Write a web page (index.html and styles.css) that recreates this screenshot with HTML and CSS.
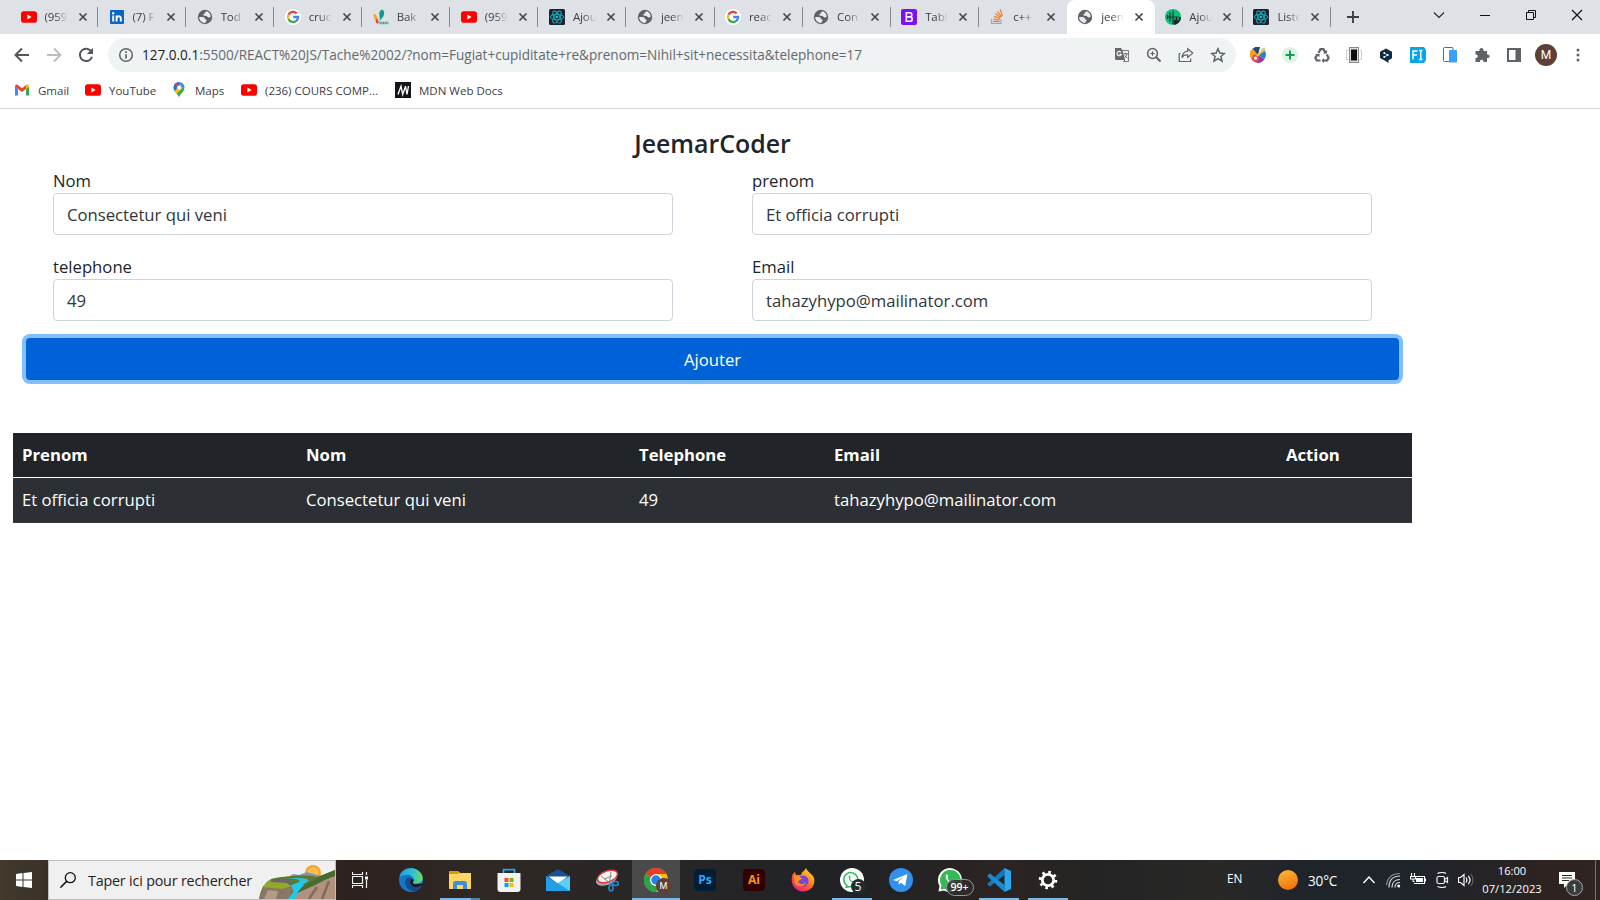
FILE: index.html
```html
<!DOCTYPE html>
<html lang="fr">
<head>
<meta charset="utf-8">
<title>jeemarCoder</title>
<link rel="stylesheet" href="styles.css">
</head>
<body>
<svg class="sprite" width="0" height="0">
  <symbol id="yt" viewBox="0 0 16 16"><rect y="2.3" width="16" height="11.4" rx="2.8" fill="#f00"/><path d="M6.4 5.5v5L10.6 8z" fill="#fff"/></symbol>
  <symbol id="globe" viewBox="0 0 16 16"><circle cx="8" cy="8" r="7.2" fill="#5f6368"/><path d="M9 2.200c2.500.3 4.500 2.500 4.800 5.300-.8 1-2.300 1.300-3 .8-.8-.6-.5-1.600-1.700-1.600H7.200c-.9 0-1.200-1.200-.3-1.700.8-.5.6-.8 1.200-1.300.5-.4.200-1 .9-1.500zM2.200 8h3.300c1.600 0 2.300 1 2.700 2 .3.900 1.700.6 1.500 1.600-.2.700-1 .8-1.200 1.600v.8C5 14 2.300 11.500 2.200 8z" fill="#e9ebee"/></symbol>
  <symbol id="google" viewBox="0 0 16 16"><circle cx="8" cy="8" r="8" fill="#fff"/><g fill="none" stroke-width="2.300"><path d="M11.700 4.400A5.100 5.100 0 0 0 3.500 5.700" stroke="#ea4335"/><path d="M3.500 5.700a5.100 5.100 0 0 0 0 4.600" stroke="#fbbc05"/><path d="M3.500 10.300a5.100 5.100 0 0 0 7.800 1.600" stroke="#34a853"/><path d="M11.300 11.900A5.100 5.100 0 0 0 13.100 8H8.200" stroke="#4285f4"/></g></symbol>
  <symbol id="react" viewBox="0 0 16 16"><rect width="16" height="16" rx="1.500" fill="#20232a"/><g fill="none" stroke="#12b5cb" stroke-width=".9"><ellipse cx="8" cy="8" rx="6.800" ry="2.700"/><ellipse cx="8" cy="8" rx="6.800" ry="2.700" transform="rotate(60 8 8)"/><ellipse cx="8" cy="8" rx="6.800" ry="2.700" transform="rotate(120 8 8)"/></g><circle cx="8" cy="8" r="1.300" fill="#12c5dc"/></symbol>
  <symbol id="close" viewBox="0 0 16 16"><path d="M4.500 4.500l7 7M11.500 4.500l-7 7" stroke="#45494d" stroke-width="1.700"/></symbol>
  <symbol id="phone" viewBox="0 0 16 16"><path d="M4.600 3.500c1-.8 1.700 1.300 1.800 2 .1.600-1 1-.6 1.500 1 1.700 1.900 2.500 3.300 3.100.6.200 1-1 1.500-.8.700.3 2.300 1 1.700 1.800-2.400 3.200-9.900-3-7.700-7.600z"/></symbol>
</svg>

<header class="browser">
  <div class="tabstrip">
    <div class="tab"><svg class="i16"><use href="#yt"/></svg><span class="tt">(959</span><svg class="i16 x"><use href="#close"/></svg></div>
    <div class="tab"><svg class="i16" viewBox="0 0 16 16"><rect x="1" y="1" width="14" height="14" rx="1" fill="#0a66c2"/><circle cx="4.200" cy="4.300" r="1.200" fill="#fff"/><path d="M4.200 6.500v6M7.600 12.500v-6M7.600 9.500c0-3 4.200-3 4.200 0v3" stroke="#fff" stroke-width="1.900" fill="none"/></svg><span class="tt">(7) F</span><svg class="i16 x"><use href="#close"/></svg></div>
    <div class="tab"><svg class="i16"><use href="#globe"/></svg><span class="tt">Tod</span><svg class="i16 x"><use href="#close"/></svg></div>
    <div class="tab"><svg class="i16"><use href="#google"/></svg><span class="tt">cruc</span><svg class="i16 x"><use href="#close"/></svg></div>
    <div class="tab"><svg class="i16" viewBox="0 0 16 16"><path d="M7 2c2-3 5 0 4 3 0 3-3 5-5 7C8 8 5 5 7 2z" fill="#109a8d"/><path d="M.5 5c2-.5 3 1 3.500 3s2 3 1 5C3 11 0 8 .5 5z" fill="#f6a623"/><path d="M3 9l3 4-1.500 2C3 14 2 11 3 9z" fill="#e8452c"/><path d="M6.500 14h9" stroke="#2aa69b" stroke-width="2.500" stroke-dasharray="1.200 .5"/></svg><span class="tt">Bak</span><svg class="i16 x"><use href="#close"/></svg></div>
    <div class="tab"><svg class="i16"><use href="#yt"/></svg><span class="tt">(959</span><svg class="i16 x"><use href="#close"/></svg></div>
    <div class="tab"><svg class="i16"><use href="#react"/></svg><span class="tt">Ajou</span><svg class="i16 x"><use href="#close"/></svg></div>
    <div class="tab"><svg class="i16"><use href="#globe"/></svg><span class="tt">jeen</span><svg class="i16 x"><use href="#close"/></svg></div>
    <div class="tab"><svg class="i16"><use href="#google"/></svg><span class="tt">reac</span><svg class="i16 x"><use href="#close"/></svg></div>
    <div class="tab"><svg class="i16"><use href="#globe"/></svg><span class="tt">Con</span><svg class="i16 x"><use href="#close"/></svg></div>
    <div class="tab"><svg class="i16" viewBox="0 0 16 16"><rect width="16" height="16" rx="2" fill="#7f10f5"/><path d="M5.300 3.700v8.600h3.500c3.200 0 3.200-4.300 0-4.400 2.700-.1 2.700-4.200 0-4.200zM5.300 7.900h3.500" fill="none" stroke="#fff" stroke-width="1.600"/></svg><span class="tt">Tabl</span><svg class="i16 x"><use href="#close"/></svg></div>
    <div class="tab nodiv"><svg class="i16" viewBox="0 0 16 16"><path d="M2.500 10v4.300h9.500V10" fill="none" stroke="#a5a8ab" stroke-width="1.200"/><path d="M4 12.300h6.500M4.200 10l6.400.8M4.900 7.400l6.100 2M6.300 4.500l5.400 3.900M8.500 2.300l4 5.500M11.300.5l2 6.500" stroke="#f48024" stroke-width="1.200"/></svg><span class="tt">c++</span><svg class="i16 x"><use href="#close"/></svg></div>
    <div class="tab active"><svg class="i16"><use href="#globe"/></svg><span class="tt">jeen</span><svg class="i16 x"><use href="#close"/></svg></div>
    <div class="tab"><svg class="i16" viewBox="0 0 16 16"><circle cx="8" cy="8" r="8" fill="#0cbf78"/><path d="M9 8h7a8 8 0 0 1-7 8z" fill="#1c232b"/><path d="M8 2v13M2 8h12M5 3.500v9M2.500 6v4" stroke="#12382f" stroke-width="1.200"/><path d="M10 8v3M13 8v3.500" stroke="#0cbf78" stroke-width="1.300"/></svg><span class="tt">Ajou</span><svg class="i16 x"><use href="#close"/></svg></div>
    <div class="tab"><svg class="i16"><use href="#react"/></svg><span class="tt">Liste</span><svg class="i16 x"><use href="#close"/></svg></div>
    <svg class="newtab" viewBox="0 0 16 16"><path d="M8 2v12M2 8h12" stroke="#3c4043" stroke-width="1.900"/></svg>
    <div class="wincontrols">
      <svg class="i16" viewBox="0 0 16 16"><path d="M3 5.500l5 5 5-5" fill="none" stroke="#222" stroke-width="1.100"/></svg>
      <svg class="i16" viewBox="0 0 16 16"><path d="M3 8.500h10" stroke="#111"/></svg>
      <svg class="i16" viewBox="0 0 16 16"><path d="M3.500 5.500h7v7h-7zM5.500 5.500v-2h7v7h-2" fill="none" stroke="#111"/></svg>
      <svg class="i16" viewBox="0 0 16 16"><path d="M3 3l10 10M13 3L3 13" stroke="#111" stroke-width="1.200"/></svg>
    </div>
  </div>

  <div class="toolbar">
    <div class="nav">
      <svg class="i16" viewBox="0 0 16 16"><path d="M15 8H2M8 1.500L1.500 8 8 14.500" fill="none" stroke="#53575b" stroke-width="2"/></svg>
      <svg class="i16" viewBox="0 0 16 16"><path d="M1 8h13M8 1.500L14.500 8 8 14.500" fill="none" stroke="#bbbdc0" stroke-width="2"/></svg>
      <svg class="i16" viewBox="0 0 16 16"><path d="M13.300 4.500A6.200 6.200 0 1 0 14 9.800" fill="none" stroke="#53575b" stroke-width="2"/><path d="M15 .8V7H8.800z" fill="#53575b"/></svg>
    </div>
    <div class="omnibox">
      <svg class="i16" viewBox="0 0 16 16"><circle cx="8" cy="8" r="6.300" fill="none" stroke="#5f6368" stroke-width="1.500"/><path d="M8 7.200v4.300M8 4.300v1.600" stroke="#5f6368" stroke-width="1.700"/></svg>
      <div class="url"><span class="host">127.0.0.1</span>:5500/REACT%20JS/Tache%2002/?nom=Fugiat+cupiditate+re&amp;prenom=Nihil+sit+necessita&amp;telephone=17</div>
      <div class="omni-actions">
        <svg class="i16" viewBox="0 0 16 16"><path d="M1 1h6l1.500 2L11 13H2.500C1.500 13 1 12.500 1 11.500z" fill="#666a6e"/><path d="M8.500 3.500h6v11H9.500L11 13" fill="none" stroke="#777" /><path d="M7 5.300a2.200 2.200 0 1 0 .3 2H5.200" fill="none" stroke="#fff" stroke-width="1.100"/><path d="M9.800 6.800h4M11.700 5.800v1M13 7c-.5 1.800-1.500 3-2.500 3.800M10.500 8.500l2.800 2.800" stroke="#666" fill="none"/></svg>
        <svg class="i16" viewBox="0 0 16 16"><circle cx="6.500" cy="6.500" r="4.900" fill="none" stroke="#5f6368" stroke-width="1.500"/><path d="M10 10l4.500 4.500" stroke="#5f6368" stroke-width="1.900"/><path d="M6.500 4.200v4.600M4.200 6.500h4.600" stroke="#5f6368" stroke-width="1.200"/></svg>
        <svg class="i16" viewBox="0 0 16 16"><path d="M2.500 6.500H1.200v8h11.500v-3" fill="none" stroke="#5f6368" stroke-width="1.200"/><path d="M9.700 1.800l5 4.300-5 4.300V8C7 7.800 5 8.800 4 10.800c.2-3.800 2.200-6.300 5.700-6.700z" fill="none" stroke="#5f6368" stroke-width="1.200"/></svg>
        <svg class="i16" viewBox="0 0 16 16"><path d="M8 1.800l1.800 4.300 4.600.4-3.500 3 1.100 4.600-4-2.500-4 2.500 1.100-4.600-3.500-3 4.600-.4z" fill="none" stroke="#5f6368" stroke-width="1.500"/></svg>
      </div>
    </div>
    <div class="exts">
      <svg class="i16" viewBox="0 0 16 16"><path d="M8 8L1 4a8 8 0 0 1 9-4z" fill="#27496d"/><path d="M8 8L0 11V4l3-2z" fill="#f5a623"/><path d="M8 8l-7 3a8 8 0 0 0 7 5z" fill="#e73360"/><path d="M8 8v8a8 8 0 0 0 6.500-4z" fill="#8a3fa0"/><path d="M8 8l6.500 4A8 8 0 0 0 15 4z" fill="#2980c9"/><path d="M8 8l5-7 2.500 3z" fill="#58b9c9"/><circle cx="5.500" cy="11" r="3.500" fill="#ef4b55"/><circle cx="5.500" cy="11" r="1.500" fill="#fff"/><path d="M7 9l8-8" stroke="#ffc83d" stroke-width="2"/></svg>
      <svg class="i16" viewBox="0 0 16 16"><circle cx="8" cy="8" r="8" fill="#def3e2"/><path d="M8 3.500v9M3.500 8h9" stroke="#0aa05e" stroke-width="2"/></svg>
      <svg class="i16" viewBox="0 0 16 16"><g fill="none" stroke="#5f6368" stroke-width="2.200"><path d="M4.500 6l2-3.800h3L11.500 6"/><path d="M12.800 7.500l1.800 3.300-1.400 2.700H9"/><path d="M6.500 13.500H2.700l-1.400-2.700L3.500 7.500"/></g><path d="M9 6.500h4V3zM10 11v5l-2.500-2.500zM1 7h4.500v3z" fill="#5f6368"/></svg>
      <svg class="i16" viewBox="0 0 16 16"><path d="M2.500 3.500H.5v9h2M13.500 3.500h2v9h-2" fill="none" stroke="#ccc"/><rect x="3.500" y=".5" width="9" height="15" fill="#ddd" stroke="#888"/><path d="M5 2.500h6v11H5z" fill="#0c0c0c"/></svg>
      <svg class="i16" viewBox="0 0 16 16"><path d="M8 1.500l6 3.300v6.500l-3.500 2V16l-3-2-5.500-3V4.800z" fill="#0f2b46"/><path d="M6.200 6L9.800 8l-3.600 2" fill="none" stroke="#fff" stroke-width=".8"/><circle cx="6.200" cy="6" r=".9" fill="#fff"/><circle cx="9.800" cy="8" r=".9" fill="#fff"/><circle cx="6.200" cy="10" r=".9" fill="#fff"/></svg>
      <svg class="i16" viewBox="0 0 16 16"><path d="M0 0h14l2 3v10l-2 3H0z" fill="#08a4e8"/><path d="M3 12.500V4h4.500M3 8h4M9 3.500h3.500M9 12.500h3.500M10.800 3.500v9" fill="none" stroke="#fff" stroke-width="1.400"/></svg>
      <svg class="i16" viewBox="0 0 16 16"><rect x="1.500" y=".5" width="9.500" height="14" rx="1" fill="#fff" stroke="#667"/><rect x="7" y="3" width="8" height="12.500" rx="1" fill="#3aa0fa"/></svg>
      <svg class="i16" viewBox="0 0 16 16"><path d="M1.500 4h4c-1-3 4-4.500 4-.7V4H13v3.500c3.500-.5 3.500 4 0 3.500v4H9.500c.3-3-4-3-3.500 0H1.500v-4c3 .3 3-3.800 0-3.500z" fill="#5f6368"/></svg>
      <svg class="i16" viewBox="0 0 16 16"><path d="M2 2h12v12H2z" fill="#fff" stroke="#5f6368" stroke-width="2"/><path d="M9.500 2H14v12H9.500z" fill="#5f6368"/></svg>
      <div class="avatar">M</div>
      <svg class="i16" viewBox="0 0 16 16"><g fill="#5f6368"><circle cx="8" cy="3" r="1.500"/><circle cx="8" cy="8" r="1.500"/><circle cx="8" cy="13" r="1.500"/></g></svg>
    </div>
  </div>

  <div class="bookmarks">
    <div class="bm gmail"><svg class="i16" viewBox="0 0 16 16"><path d="M1 4v9.500h3V7z" fill="#4285f4"/><path d="M15 4v9.500h-3V7z" fill="#34a853"/><path d="M1 4.500L4 7l4 3 4-3V3L8 6.200 3.500 2.700C2.300 2 1 2.800 1 4.500z" fill="#ea4335"/><path d="M12 3v4l3-2.500C15 2.500 13.500 2 12 3z" fill="#fbbc04"/></svg><span>Gmail</span></div>
    <div class="bm youtube"><svg class="i16"><use href="#yt"/></svg><span>YouTube</span></div>
    <div class="bm maps"><svg class="i16" viewBox="0 0 16 16"><path d="M8 16C7.500 12 2.500 10 2.500 5.500L8 5.300l5.500 0C13.500 10 8.500 12 8 16z" fill="#34a853"/><path d="M2.500 5.500A5.500 5.500 0 0 1 8 0v5.500L3.500 9z" fill="#1a73e8"/><path d="M3 3.200C3.500 2 5 .5 6.500.2L8 5z" fill="#ea4335"/><path d="M8 0a5.500 5.500 0 0 1 5.500 5.500L8 5.500z" fill="#4285f4"/><path d="M3.500 9L10 2.500 11 7l-5.500 5z" fill="#fbbc04"/><circle cx="8" cy="5.500" r="2" fill="#fff"/></svg><span>Maps</span></div>
    <div class="bm cours"><svg class="i16"><use href="#yt"/></svg><span>(236) COURS COMP...</span></div>
    <div class="bm mdn"><svg class="i16" viewBox="0 0 16 16"><rect width="16" height="16" fill="#15141a"/><path d="M3 12.500L6 4.200l1.700 8.300L10.500 4.200 12 12.500 13.500 4" fill="none" stroke="#fff" stroke-width="1.300"/></svg><span>MDN Web Docs</span></div>
  </div>
</header>

<main class="page">
  <h4 class="title"><span>JeemarCoder</span></h4>
  <form class="form">
    <div class="fields">
      <div class="field"><label>Nom</label><div class="control">Consectetur qui veni</div></div>
      <div class="field"><label>prenom</label><div class="control">Et officia corrupti</div></div>
      <div class="field"><label>telephone</label><div class="control">49</div></div>
      <div class="field"><label>Email</label><div class="control">tahazyhypo@mailinator.com</div></div>
    </div>
    <div class="submit">Ajouter</div>
  </form>
  <div class="table">
    <div class="row head"><span>Prenom</span><span>Nom</span><span>Telephone</span><span>Email</span><span>Action</span></div>
    <div class="row"><span>Et officia corrupti</span><span>Consectetur qui veni</span><span>49</span><span>tahazyhypo@mailinator.com</span><span></span></div>
  </div>
</main>

<footer class="taskbar">
  <div class="start"><svg class="i16" viewBox="0 0 16 16"><path d="M0 2l6.500-1v6.500H0zM7.500.900L16 0v7.500H7.500zM0 8.500h6.500V15L0 14zM7.500 8.500H16V16l-8.500-.9z" fill="#fff"/></svg></div>
  <div class="search">
    <svg class="i16" viewBox="0 0 16 16"><circle cx="10.300" cy="5.700" r="5" fill="none" stroke="#111" stroke-width="1.300"/><path d="M6.600 9.400L.4 15.600" stroke="#111" stroke-width="1.500"/></svg>
    <span class="search-text">Taper ici pour rechercher</span>
    <svg class="scene" viewBox="0 0 76 34" width="76" height="34"><circle cx="54" cy="8" r="8" fill="#f9a52b"/><circle cx="54" cy="8" r="5.500" fill="#ffc04d"/><path d="M28 13l6-4 6 1 8-3 14 4 2 5-20 3z" fill="#8c93a8"/><path d="M0 34c2-12 8-20 16-21 12-2 32-4 42-1l18-7v29z" fill="#5b7a35"/><path d="M0 34l5-12 15-3 14 4-4 11z" fill="#8a7567"/><path d="M3 22l8-7 16 1 6 5-10 3z" fill="#93a928"/><path d="M12 15.500l16 1 8 5" stroke="#6d6468" stroke-width="3" fill="none"/><path d="M26 14c14-1 20 2 9 5-7 2 1 4-1 8l-5 7h10l3-9c5-4-1-5 6-8 5-3-4-4-12-4z" fill="#25c8e4"/><path d="M76 6v28H36c4-10 10-9 18-15z" fill="#b0927f"/><path d="M76 5L62 11 43 22l-5 6 16-7 14-7 8-3z" fill="#456b2e"/><path d="M58 22l-8 12M70 16l-7 18" stroke="#83695b" stroke-width="2.500"/><path d="M9 25l-4 9h12l2-8z" fill="#b59b87"/></svg>
  </div>
  <div class="taskview"><svg class="i16" viewBox="0 0 16 16"><path d="M.5 0v2.500h10V0M.5 16v-2.500h10V16M.5 4.500h10v7H.5zM14.500 0v3M14.500 8v8" fill="none" stroke="#f2f2f2" stroke-width="1.200"/><path d="M13 4.500h3v3h-3z" fill="#fff"/></svg></div>
  <div class="apps">
    <div class="app"><svg viewBox="0 0 24 24"><defs><linearGradient id="eg" x1="0" x2="1"><stop offset="0" stop-color="#1b9de2"/><stop offset=".6" stop-color="#35c1d2"/><stop offset="1" stop-color="#6fe04a"/></linearGradient></defs><circle cx="12" cy="12" r="12" fill="#1477c9"/><path d="M.5 9C2-1 17-3 22.500 6c3.500 6-1 11-7 10-3-.5-2-2-1-4 0-5-7-7-14-3z" fill="url(#eg)"/><path d="M7 11c-3 6 2 13 10 12 3-1 5-3 5.500-5-6 4-13 0-11-6 1-2 2-1 2.500-1-2-2-5-2-7 0z" fill="#134c90"/><path d="M11.500 12c-2 6 5 10 11 5.500.5-.5 1 0 .5 1 2-4 1-3-7-2.500-3-.5-2-2-1-4-1-1.500-2.500-1.500-3.500 0z" fill="#211f20"/></svg></div>
    <div class="app run wide"><svg viewBox="0 0 24 24"><path d="M1 3h9l2 2h11v16H1z" fill="#ffd563"/><path d="M1 3h9l1 3H1z" fill="#dc9900"/><path d="M5 21v-5c0-2 1-3 2-3h10c1 0 2 1 2 3v5h-4v-4H9v4z" fill="#3e8edb"/></svg></div>
    <div class="app"><svg viewBox="0 0 24 24"><path d="M6.500 6V1.700h11V6" fill="none" stroke="#27a5e8" stroke-width="1.800"/><path d="M.5 5h23v16c0 2-1 3-3 3h-17c-2 0-3-1-3-3z" fill="#f2f2f2"/><path fill="#f25022" d="M7.500 10h4v4h-4z"/><path fill="#7fba00" d="M12.500 10h4v4h-4z"/><path fill="#00a4ef" d="M7.500 15h4v4h-4z"/><path fill="#ffb900" d="M12.500 15h4v4h-4z"/></svg></div>
    <div class="app"><svg viewBox="0 0 24 24"><path d="M0 8l12-7 12 7v7H0z" fill="#1b4f91"/><path d="M2.500 8.500h19L12 16z" fill="#fff"/><path d="M0 8l12 7.500L24 8v15H0z" fill="#209fe5"/><path d="M24 8v15L11.500 15z" fill="#5fcef4"/></svg></div>
    <div class="app"><svg viewBox="0 0 24 24"><ellipse cx="11.500" cy="11" rx="11" ry="6" transform="rotate(-20 11.500 11)" fill="#a5a5a8"/><ellipse cx="12.500" cy="8.500" rx="10.500" ry="5.500" transform="rotate(-20 12.500 8.500)" fill="#f4f4f4" stroke="#dc3740" stroke-width="1.400"/><path d="M6 8l10 8M16 4l-2 13M9 11l8-3" stroke="#888"/><g fill="none" stroke="#2585cc" stroke-width="1.700"><ellipse cx="20.500" cy="15.500" rx="3" ry="2"/><ellipse cx="16" cy="20" rx="2" ry="3"/></g></svg></div>
    <div class="app run focus"><svg viewBox="0 0 24 24"><circle cx="12" cy="12" r="12" fill="#fbbc05"/><path d="M12 12L1.600 6A12 12 0 0 1 22.400 6H12z" fill="#e33b2e"/><path d="M1.600 6A12 12 0 0 0 12 24l5-9-5-3z" fill="#2ba24c"/><circle cx="12" cy="12" r="6" fill="#fff"/><circle cx="12" cy="12" r="4.700" fill="#2d7de9"/></svg><span class="badge mbadge">M</span></div>
    <div class="app"><div class="adobe ps">Ps</div></div>
    <div class="app"><div class="adobe ai">Ai</div></div>
    <div class="app"><svg viewBox="0 0 24 24"><defs><linearGradient id="fx" x1="1" y1="0" x2=".3" y2="1"><stop offset="0" stop-color="#fff24a"/><stop offset=".4" stop-color="#ff9a20"/><stop offset=".8" stop-color="#ff3b48"/><stop offset="1" stop-color="#e7229b"/></linearGradient></defs><path d="M4 4l1 3 5 0c1-4 3-3 5-7 1 4 6 5 8 10 2 9-5 13.500-11 13.500S-1 18 1 9c0-2 1-4 3-5z" fill="url(#fx)"/><circle cx="12" cy="13" r="5.500" fill="#7546d8"/><path d="M3 8c5-2 5 2 9 2-3 1-3 3-5 3 1 4 6 4 8 1-1 6-11 6-12-1z" fill="#ff8d25"/></svg></div>
    <div class="app run"><svg viewBox="0 0 24 24"><circle cx="12" cy="12" r="12" fill="#fff"/><path d="M7 17.500A7 7 0 1 1 10 18.600L6.200 19.300z" fill="none" stroke="#29bf5a" stroke-width="1.500"/><use href="#phone" x="5" y="4.500" width="14" height="14" fill="#29bf5a"/></svg><span class="badge five">5</span></div>
    <div class="app"><svg viewBox="0 0 24 24"><circle cx="12" cy="12" r="12" fill="#3390ec"/><path d="M4 12L18.500 6l-2.300 12-4.300-3.200-2.200 2v-3.500L15 8.500l-7 4.800z" fill="#fff"/></svg></div>
    <div class="app"><svg viewBox="0 0 24 24"><path d="M.5 23.500l1-5.500A12 12 0 1 1 6 22.500z" fill="#fff"/><path d="M2.500 21.500l1-4A10.300 10.300 0 1 1 7 21z" fill="#35b956"/><use href="#phone" x="3" y="2.500" width="18" height="18" fill="#fff"/></svg><span class="badge many">99+</span></div>
    <div class="app run"><svg viewBox="0 0 24 24"><path d="M17.500 0v7L3 18.500 0 16z" fill="#1478bd"/><path d="M0 8l3-2.500L17.500 17v7z" fill="#1b8bd5"/><path d="M17.500 0L24 3v18l-6.500 3z" fill="#2ba7f0"/></svg></div>
    <div class="app run"><svg viewBox="0 0 24 24"><circle cx="12" cy="12" r="5.700" fill="none" stroke="#fff" stroke-width="2.800"/><circle cx="12" cy="12" r="7.800" fill="none" stroke="#fff" stroke-width="3" stroke-dasharray="2.600 3.526"/></svg></div>
  </div>
  <div class="tray">
    <span class="lang">EN</span>
    <span class="sun"></span>
    <span class="temp">30°C</span>
    <svg class="t1" viewBox="0 0 16 16"><path d="M2.500 11L8 5l5.500 6" fill="none" stroke="#fff" stroke-width="1.400"/></svg>
    <svg class="t2" viewBox="0 0 16 16"><g fill="none" stroke="#d8d8d8" stroke-width="1.200"><path d="M3 15.500C3 8 7 4 14 4"/><path d="M6 15.500c0-5 3-8 8-8"/><path d="M9 15.500c0-3 2-5 5-5"/><path d="M.5 13C1.500 6 6 1.500 14 1.500" opacity=".6"/></g><circle cx="12.700" cy="14" r="1.500" fill="#fff"/></svg>
    <svg class="t2" viewBox="0 0 16 16"><path d="M5 4.500h9.500v7H4M15.500 6.500v3M1.500 1v3M4.500 1v3M.5 4.500h5v2.500h-5zM3 7v2l1.500 1" fill="none" stroke="#fff" stroke-width="1.100"/><path d="M6 6h7v4H6z" fill="#fff"/></svg>
    <svg class="t2" viewBox="0 0 16 16"><rect x="3" y="4.500" width="7.500" height="7" rx="1.500" fill="none" stroke="#eee" stroke-width="1.200"/><path d="M10.500 7.500l3-2v5l-3-2M3.500 1.500C6 .2 10 .2 12 1.500M3.500 14.500c2.500 1.300 6.500 1.300 8.500 0" fill="none" stroke="#eee" stroke-width="1.200"/></svg>
    <svg class="t2" viewBox="0 0 16 16"><path d="M.5 5.500h2L6 2.500v11l-3.500-3h-2zM8 5.500c1 1.500 1 3.500 0 5M10.300 3.800c2 2.500 2 6 0 8.400" fill="none" stroke="#fff" stroke-width="1.200"/><path d="M12.700 2c3 3.500 3 8.500 0 12" fill="none" stroke="#777"/></svg>
    <div class="clock"><span>16:00</span><span>07/12/2023</span></div>
    <div class="notif"><svg class="i16" viewBox="0 0 16 16"><path d="M0 0h16v12H9l-4 4v-4H0z" fill="#fff"/><path d="M3 3.500h10M3 6h10M3 8.500h7" stroke="#2b2625"/></svg><span class="badge one">1</span></div>
    <span class="showdesk"></span>
  </div>
</footer>
</body>
</html>
```
FILE: styles.css
```css
* { box-sizing: border-box; }
body {
  margin: 0;
  width: 1600px;
  height: 900px;
  overflow: hidden;
  display: flex;
  flex-direction: column;
  background: #fff;
  color: #212529;
  font-family: "Open Sans", "Noto Sans", sans-serif;
}
.sprite { position: absolute; }
svg { display: block; flex: none; }
.i16 { width: 16px; height: 16px; flex: none; }

/* Browser chrome */
.browser { height: 109px; border-bottom: 1px solid #d5d7da; }
.tabstrip { height: 34px; background: #dee1e6; display: flex; align-items: center; padding-left: 10px; }
.tab { width: 88.070px; height: 34px; display: flex; align-items: center; padding-left: 10.500px; background: linear-gradient(#85888d, #85888d) right 7px / 1px 20px no-repeat; }
.tab.nodiv, .tab.active { background: none; }
.tab.active { background: #fff; border-radius: 8px 8px 0 0; }
.tt {
  width: 23px;
  margin-left: 8px;
  white-space: nowrap;
  font-size: 11.500px;
  line-height: 16px;
  letter-spacing: -.1px;
  color: #3c4043;
  -webkit-mask-image: linear-gradient(90deg, #000 45%, transparent);
  mask-image: linear-gradient(90deg, #000 45%, transparent);
}
.x { margin-left: 7px; }
.newtab { width: 16px; height: 16px; margin-left: 14px; }
.wincontrols { margin: 0 15px 5px auto; display: flex; gap: 30px; }
.toolbar { height: 41px; display: flex; align-items: center; padding: 1px 0 0 14px; }
.nav { display: flex; gap: 16px; }
.omnibox { width: 1128px; height: 34px; margin-left: 14px; border-radius: 17px; background: #eff3f4; display: flex; align-items: center; padding: 0 10px; }
.url { margin-left: 8px; font-size: 13.560px; white-space: nowrap; color: #65696e; }
.host { color: #202124; }
.omni-actions { margin-left: auto; display: flex; gap: 16px; }
.exts { display: flex; align-items: center; gap: 16px; margin-left: 14px; }
.avatar { width: 22px; height: 22px; margin: 0 -3px; border-radius: 50%; background: #5d4037; color: #fff; font: 12px/22px Roboto, sans-serif; text-align: center; }
.bookmarks { height: 30px; display: flex; align-items: center; padding-left: 14px; color: #3c4043; font-size: 11.500px; white-space: nowrap; }
.bm { display: flex; align-items: center; gap: 8px; }
.gmail { width: 71px; }
.youtube { width: 86px; }
.maps { width: 70px; }
.cours { width: 154px; }

/* Web page */
.page { height: 751px; width: 1424px; padding: 19px 12px 0 13px; font-size: 16.700px; line-height: 26.400px; }
.title { margin: 0 0 10px; height: 31px; font-size: 24.900px; line-height: 31px; font-weight: 600; text-align: center; }
.form { padding: 0 13px; }
.fields { display: grid; grid-template-columns: 620px 620px; column-gap: 79px; row-gap: 18px; padding: 0 27px; }
.field { height: 68px; display: flex; flex-direction: column; }
.field label { height: 24px; line-height: 24px; }
.control { height: 42px; border: 1px solid #ced4da; border-radius: 4px; padding: 0 13px; line-height: 41px; color: #30363b; }
.submit { height: 42px; margin-top: 15px; border-radius: 4px; background: #0062d6; box-shadow: 0 0 0 4px #80c0ff; color: #fff; text-align: center; line-height: 43px; }
.table { margin-top: 53px; background: #212529; color: #fff; }
.row { display: grid; grid-template-columns: 284px 333px 195px 452px 1fr; padding-left: 9px; height: 45px; align-items: center; background: #2c3034; border-bottom: 1px solid #373b3e; }
.head { background: #212529; font-weight: 700; border-bottom: 1px solid #fff; }

/* Taskbar */
.taskbar { height: 40px; display: flex; color: #fff; background: linear-gradient(90deg, #423a2c 0, #3a3028 48px, #2c2220 350px, #2f2824 480px, #252527 720px, #202225 840px, #2b2422 1000px, #242424 1100px, #292827 1220px, #1f242b 1310px, #1f242b 1420px, #2c2322 1540px, #302421 1600px); }
.start, .taskview { width: 48px; display: flex; align-items: center; justify-content: center; }
.search { width: 288px; background: #f0f0f0; border: 1px solid #bfbfbf; display: flex; align-items: center; padding-left: 11px; color: #222; }
.search-text { margin-left: 12px; width: 172px; font-size: 14.300px; letter-spacing: -.18px; white-space: nowrap; }
.scene { align-self: flex-end; }
.apps { display: flex; margin-left: 2.500px; }
.app { position: relative; width: 49px; display: flex; align-items: center; justify-content: center; }
.app > svg { width: 24px; height: 24px; }
.run::after { content: ""; position: absolute; left: 4.500px; bottom: 0; width: 40px; height: 2px; background: #76b9ed; }
.wide::after { background: linear-gradient(90deg, #76b9ed 31px, #557ea0 31px); }
.focus { background: linear-gradient(#4b4a4a, #4b4a4a) center / 48px 40px no-repeat; }
.focus::after { left: .5px; width: 48px; }
.adobe { width: 22px; height: 22px; border-radius: 4px; font-size: 12px; line-height: 21px; font-weight: 700; text-align: center; }
.ps { background: #001e36; color: #31a8ff; }
.ai { background: #330000; color: #ff9a00; }
.badge { position: absolute; text-align: center; }
.mbadge { left: 24px; top: 18px; width: 16px; height: 16px; border-radius: 50%; background: #5d4037; font: 9px/16px Roboto, sans-serif; }
.five { left: 23px; top: 19px; width: 15px; height: 15px; border-radius: 50%; background: #202b35; font-size: 12px; line-height: 15px; }
.many { left: 20px; top: 19px; width: 28px; height: 17px; border: 1px solid #999; border-radius: 9px; background: rgba(45, 45, 45, .85); font-size: 10.500px; font-weight: 600; line-height: 15px; }
.tray { margin-left: auto; display: flex; align-items: center; }
.lang { width: 50px; font-size: 11.800px; margin-bottom: 5px; }
.sun { width: 20px; height: 20px; margin-left: 1px; border-radius: 50%; background: linear-gradient(160deg, #f9bd35, #f2650b); }
.temp { width: 53px; margin-left: 10px; font-size: 13.600px; letter-spacing: -.2px; }
.t1, .t2 { width: 16px; height: 16px; }
.t2 { margin-left: 8px; }
.t1 + .t2 { margin-left: 9px; }
.clock { width: 66px; margin-left: 5px; display: flex; flex-direction: column; text-align: center; font-size: 11.200px; line-height: 18px; }
.notif { position: relative; margin-left: 14px; }
.one { left: 7px; top: 7px; width: 17px; height: 17px; border: 1px solid #aaa; border-radius: 50%; background: #3c3a3a; font-size: 11px; line-height: 15px; }
.showdesk { width: 5px; height: 40px; margin-left: 20px; border-left: 1px solid #777; }
```
